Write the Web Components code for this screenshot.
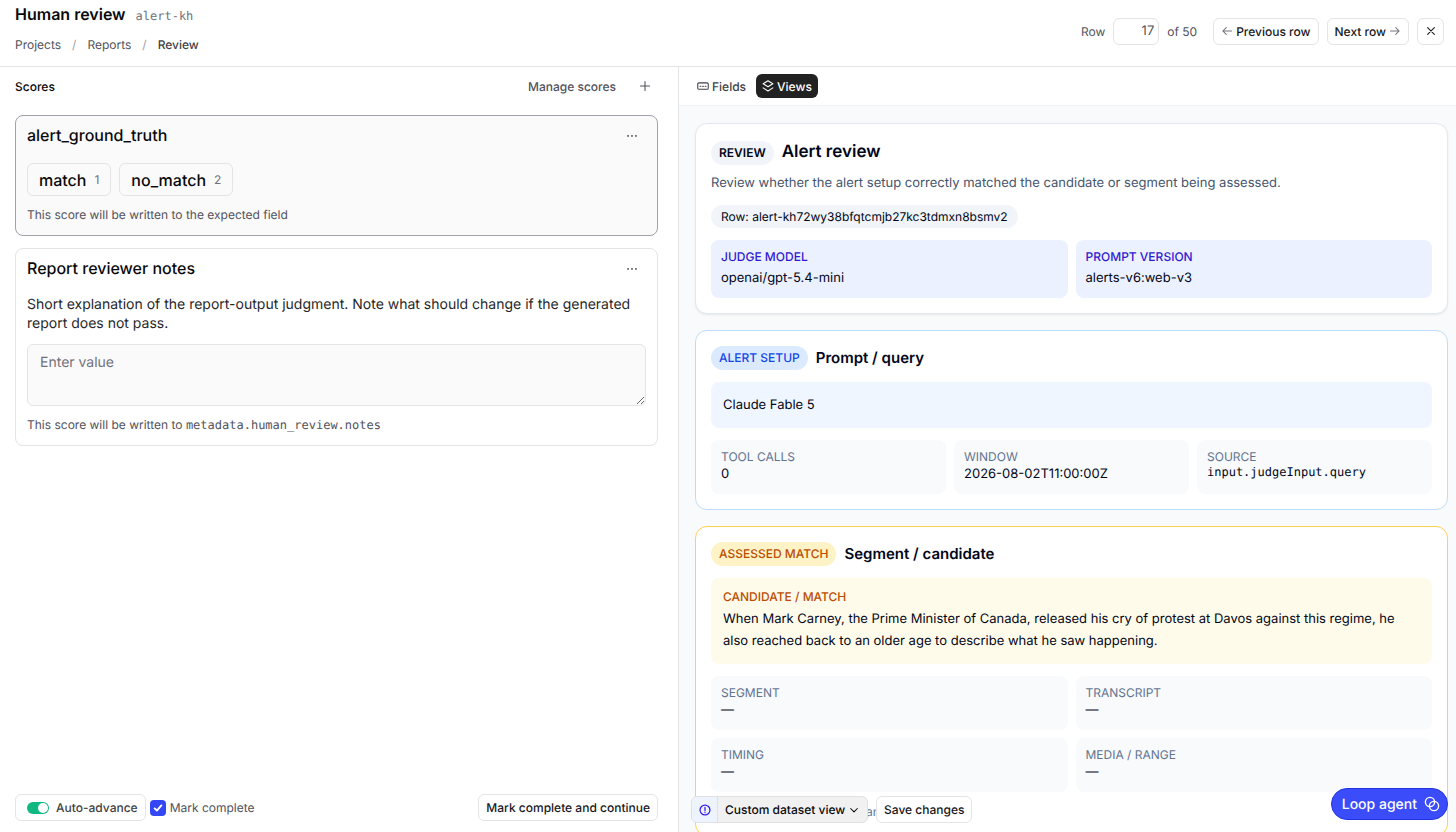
<!DOCTYPE html>
<html lang="en">
<head>
<meta charset="utf-8">
<title>Human review</title>
<style>
    html, body{
        height: 100%;
        margin: 0;
    }
    body{
        font-family: Inter, "Liberation Sans", sans-serif;
        font-size: 12px;
        color: #09090b;
        background: #fff;
        overflow: hidden;
        text-rendering: geometricPrecision;
    }
</style>
</head>
<body>
<review-page></review-page>

<script>
const ICONS = {
    left: '<path d="M14 8H2.500M7 3.500L2.500 8 7 12.500"/>',
    right: '<path d="M2 8h11.500M9 3.500l4.500 4.500L9 12.500"/>',
    close: '<path d="M3.500 3.500l9 9M12.500 3.500l-9 9"/>',
    plus: '<path d="M8 2v12M2 8h12"/>',
    down: '<path d="M3.500 6l4.500 4.500L12.500 6"/>',
    dots: '<g fill="currentColor" stroke="none"><circle cx="3.500" cy="9" r="1.100"/><circle cx="8" cy="9" r="1.100"/><circle cx="12.500" cy="9" r="1.100"/></g>',
    fields: '<rect x="1" y="3.800" width="14" height="8.600" rx="1.500"/><path d="M4 8.200h1.200M7.400 8.200h1.200M10.800 8.200H12"/>',
    layers: '<path d="M8 1L14.500 5 8 9 1.500 5zM1.500 10.500L8 14.700l6.500-4.200"/>',
    alert: '<circle cx="8" cy="8" r="6.600"/><path d="M8 4.600v4M8 10.800v.6"/>',
    check: '<path d="M3.500 8.500l3 3 6-7"/>',
    loop: '<circle cx="6" cy="6" r="4.600"/><circle cx="10" cy="10" r="4.600"/>'
};

class BaseElement extends HTMLElement {
    constructor(){
        super();
        this.attachShadow({mode: "open"});
    }

    getTemplate(){
        const template = document.createElement("template");
        template.innerHTML = `
        <style>
            *{ box-sizing: border-box; }
            h1, h2, h3, p{ margin: 0; }
            button, input, textarea, select{
                font: inherit;
                color: inherit;
                margin: 0;
                text-rendering: inherit;
            }
            ${this.getStyles()}
        </style>
        ${this.getMarkup()}
        `;
        return template;
    }

    connectedCallback(){
        if (this.shadowRoot.childNodes.length) return;
        this.shadowRoot.appendChild(this.getTemplate().content.cloneNode(true));
    }
}

class UiIcon extends BaseElement {
    getStyles(){
        return `
            :host{ display: inline-flex; flex: none; width: 12px; height: 12px; }
            svg{
                width: 100%;
                height: 100%;
                fill: none;
                stroke: currentColor;
                stroke-width: var(--stroke, 1.400);
                stroke-linecap: round;
                stroke-linejoin: round;
            }
        `;
    }
    getMarkup(){
        return `<svg viewBox="0 0 16 16" aria-hidden="true">${ICONS[this.getAttribute("name")]}</svg>`;
    }
}
customElements.define("ui-icon", UiIcon);

class UiButton extends BaseElement {
    getStyles(){
        return `
            :host{ display: inline-flex; flex: none; }
            button{
                display: flex;
                align-items: center;
                justify-content: center;
                gap: 3px;
                height: 27px;
                padding: 0 7px;
                border: 1px solid #e4e4e7;
                border-radius: 6px;
                background: #fff;
                color: #18181b;
                font-weight: 500;
                white-space: nowrap;
            }
            :host([square]) button{ width: 27px; padding: 0; }
            :host([plain]) button{
                height: 24px;
                border: 0;
                background: none;
                color: #52525b;
            }
            :host([tab]) button{
                height: 24px;
                padding: 0 6px;
                border: 0;
                background: none;
                color: #3f3f46;
            }
            :host([tab][active]) button{ background: #222; color: #fff; }
        `;
    }
    getMarkup(){
        const label = this.getAttribute("label");
        return `<button type="button" ${label ? `aria-label="${label}"` : ""}><slot></slot></button>`;
    }
}
customElements.define("ui-button", UiButton);

class PageHeader extends BaseElement {
    getStyles(){
        return `
            :host{
                display: flex;
                justify-content: space-between;
                height: 67px;
                box-sizing: border-box;
                padding: 0 12px 0 15px;
                border-bottom: 1px solid #e4e4e7;
                color: #52525b;
            }
            .title{ display: flex; align-items: baseline; gap: 10px; padding-top: 4px; }
            h1{ font-size: 16px; line-height: 20px; font-weight: 600; color: #09090b; }
            code{ font: 12px/16px "DejaVu Sans Mono", monospace; color: #71717a; }
            nav{ display: flex; gap: 11px; margin-top: 12px; line-height: 18px; }
            a{ color: inherit; text-decoration: none; }
            a[aria-current]{ color: #3f3f46; font-weight: 500; }
            nav span{ color: #a1a1aa; }
            .tools{ display: flex; align-items: center; gap: 8px; height: 62px; }
            input{
                width: 46px;
                height: 27px;
                padding: 0 4px;
                border: 1px solid #e4e4e7;
                border-radius: 6px;
                text-align: right;
                font-size: 13px;
            }
            .total{ margin-right: 8px; }
            ui-icon{ color: #71717a; }
            ui-icon[name=close]{ color: #18181b; }
        `;
    }
    getMarkup(){
        return `
        <div>
            <div class="title"><h1>Human review</h1><code>alert-kh</code></div>
            <nav aria-label="Breadcrumb">
                <a href="#">Projects</a><span>/</span><a href="#">Reports</a><span>/</span><a href="#" aria-current="page">Review</a>
            </nav>
        </div>
        <div class="tools">
            <label for="row">Row</label>
            <input id="row" type="text" inputmode="numeric" value="17">
            <span class="total">of 50</span>
            <ui-button><ui-icon name="left"></ui-icon>Previous row</ui-button>
            <ui-button>Next row<ui-icon name="right"></ui-icon></ui-button>
            <ui-button square label="Close"><ui-icon name="close"></ui-icon></ui-button>
        </div>
        `;
    }
}
customElements.define("page-header", PageHeader);

class ScoreCard extends BaseElement {
    getStyles(){
        return `
            :host{
                display: block;
                padding: 7px 11px 12px;
                border: 1px solid #e4e4e7;
                border-radius: 8px;
                background: #fff;
            }
            :host([selected]){ border-color: #a1a1aa; background: #fafafa; }
            header{ display: flex; align-items: center; justify-content: space-between; }
            h2{ font-size: 16px; line-height: 20px; font-weight: 500; }
            ui-icon{ width: 14px; height: 14px; }
            .note{ color: #52525b; line-height: 16px; }
        `;
    }
    getMarkup(){
        return `
        <header>
            <h2>${this.getAttribute("heading")}</h2>
            <ui-button plain label="More"><ui-icon name="dots"></ui-icon></ui-button>
        </header>
        <slot></slot>
        <p class="note"><slot name="note"></slot></p>
        `;
    }
}
customElements.define("score-card", ScoreCard);

class ScoreOption extends BaseElement {
    getStyles(){
        return `
            :host{ display: inline-flex; }
            button{
                display: flex;
                align-items: center;
                gap: 8px;
                height: 33px;
                padding: 0 11px;
                border: 1px solid #e4e4e7;
                border-radius: 6px;
                background: #fafafa;
                font-size: 16px;
                font-weight: 500;
            }
            span{ font-size: 12px; font-weight: 400; color: #71717a; }
        `;
    }
    getMarkup(){
        return `<button type="button"><slot></slot><span>${this.getAttribute("key")}</span></button>`;
    }
}
customElements.define("score-option", ScoreOption);

class ScoresPanel extends BaseElement {
    getStyles(){
        return `
            :host{
                display: flex;
                flex-direction: column;
                min-width: 0;
                padding: 0 20px 11px 15px;
                border-right: 1px solid #e4e4e7;
                box-sizing: border-box;
            }
            .bar{
                display: flex;
                align-items: center;
                justify-content: space-between;
                height: 38px;
            }
            .bar h2{ font-size: 12px; font-weight: 500; }
            .bar div{ display: flex; gap: 9px; }
            .cards{ display: flex; flex-direction: column; gap: 12px; padding-top: 10px; }
            .options{ display: flex; gap: 8px; margin: 16px 0 11px; }
            .about{ font-size: 14px; line-height: 19px; color: #27272a; margin: 15px 0 11px; }
            textarea{
                display: block;
                width: 100%;
                height: 62px;
                margin-bottom: 11px;
                padding: 9px 12px;
                border: 1px solid #e4e4e7;
                border-radius: 6px;
                background: #fafafa;
                font-size: 14px;
            }
            textarea::placeholder{ color: #71717a; }
            code{ font: 12px/16px "DejaVu Sans Mono", monospace; }
            footer{ display: flex; align-items: center; gap: 4px; margin-top: auto; }
            footer ui-button{ margin-left: auto; }
            .auto{
                display: flex;
                align-items: center;
                gap: 7px;
                height: 27px;
                padding: 0 7px 0 11px;
                border: 1px solid #e4e4e7;
                border-radius: 6px;
                font-weight: 500;
                color: #3f3f46;
            }
            .auto input{
                appearance: none;
                display: flex;
                width: 22px;
                height: 12px;
                padding: 1px;
                border-radius: 6px;
                background: #10b981;
                justify-content: flex-end;
            }
            .auto input::before{ content: ""; width: 10px; height: 10px; border-radius: 50%; background: #fff; }
            .done{ display: flex; align-items: center; gap: 4px; color: #52525b; }
            .box{ display: grid; place-items: center; }
            .box > *{ grid-area: 1 / 1; }
            .box input{ appearance: none; width: 16px; height: 16px; border-radius: 4px; background: #3447f5; }
            .box ui-icon{ color: #fff; pointer-events: none; --stroke: 2.500; }
        `;
    }
    getMarkup(){
        return `
        <div class="bar">
            <h2>Scores</h2>
            <div>
                <ui-button plain>Manage scores</ui-button>
                <ui-button plain label="Add score"><ui-icon name="plus"></ui-icon></ui-button>
            </div>
        </div>
        <div class="cards">
            <score-card selected heading="alert_ground_truth">
                <div class="options">
                    <score-option key="1">match</score-option>
                    <score-option key="2">no_match</score-option>
                </div>
                <span slot="note">This score will be written to the expected field</span>
            </score-card>
            <score-card heading="Report reviewer notes">
                <p class="about" id="about">Short explanation of the report-output judgment. Note what should change if the generated report does not pass.</p>
                <textarea aria-labelledby="about" placeholder="Enter value"></textarea>
                <span slot="note">This score will be written to <code>metadata.human_review.notes</code></span>
            </score-card>
        </div>
        <footer>
            <label class="auto"><input type="checkbox" role="switch" checked>Auto-advance</label>
            <label class="done"><span class="box"><input type="checkbox" checked><ui-icon name="check"></ui-icon></span>Mark complete</label>
            <ui-button>Mark complete and continue</ui-button>
        </footer>
        `;
    }
}
customElements.define("scores-panel", ScoresPanel);

class InfoCard extends BaseElement {
    getStyles(){
        return `
            :host{
                display: flex;
                flex-direction: column;
                gap: 12px;
                padding: 15px;
                border: 1px solid #e2e8f0;
                border-radius: 12px;
                background: #fff;
                --pill: #f1f5f9;
                --pill-ink: #020618;
            }
            :host(:not([tone])){ box-shadow: 0 1px 2px rgba(15, 23, 42, .08); }
            :host([tone=blue]){ border-color: #bedbff; --pill: #dbeafe; --pill-ink: #1447e6; }
            :host([tone=amber]){ border-color: #ffd24d; --pill: #fef3c6; --pill-ink: #bb4d00; }
            header{ display: flex; align-items: center; gap: 8px; }
            .pill{
                padding: 0 8px;
                border-radius: 12px;
                background: var(--pill);
                color: var(--pill-ink);
                line-height: 24px;
                font-weight: 500;
            }
            h2{ font-size: 15px; line-height: 24px; font-weight: 600; color: #020618; }
            :host(:not([tone])) h2{ font-size: 17px; line-height: 27px; }
            :host(:not([tone])) .pill{ font-weight: 600; }
        `;
    }
    getMarkup(){
        return `
        <header>
            <span class="pill">${this.getAttribute("tag")}</span>
            <h2>${this.getAttribute("heading")}</h2>
        </header>
        <slot></slot>
        `;
    }
}
customElements.define("info-card", InfoCard);

class StatTile extends BaseElement {
    getStyles(){
        return `
            :host{
                display: block;
                min-width: 0;
                height: 54px;
                box-sizing: border-box;
                padding: 8px 10px;
                border-radius: 8px;
                background: #f8fafc;
                color: #62748e;
            }
            .name{ line-height: 17px; }
            .value{ font-size: 13px; line-height: 19px; color: #020618; }
            :host([strong]){ height: 58px; background: #ebf1ff; color: #3019d0; }
            :host([strong]) .name{ font-weight: 500; }
            :host([strong]) .value{ margin-top: 4px; }
            :host([mono]) .value{ font: 12px/14px "DejaVu Sans Mono", monospace; }
        `;
    }
    getMarkup(){
        return `
        <div class="name">${this.getAttribute("name")}</div>
        <div class="value"><slot></slot></div>
        `;
    }
}
customElements.define("stat-tile", StatTile);

class ViewsPanel extends BaseElement {
    getStyles(){
        return `
            :host{
                position: relative;
                display: flex;
                flex-direction: column;
                min-width: 0;
                min-height: 0;
                background: #f8fafc;
            }
            .tabs{
                display: flex;
                flex: none;
                align-items: center;
                gap: 4px;
                height: 39px;
                padding: 0 12px;
                border-bottom: 1px solid #f1f1f3;
                background: #fff;
            }
            .scroll{
                display: flex;
                flex-direction: column;
                gap: 16px;
                flex: 1;
                min-height: 0;
                overflow: hidden;
                padding: 17px 8px 0 16px;
            }
            .scroll > *{ flex: none; }
            .lead{ font-size: 13px; line-height: 19px; color: #45556c; margin-top: -4px; }
            .row{
                align-self: flex-start;
                padding: 0 10px;
                border-radius: 12px;
                background: #f1f5f9;
                line-height: 23px;
                color: #020618;
            }
            .grid{ display: grid; grid-template-columns: 1fr 1fr; gap: 8px; }
            .three{ grid-template-columns: 1fr 1fr 1fr; }
            .quote{
                padding: 12px;
                border-radius: 8px;
                background: #eff6ff;
                font-size: 13px;
                line-height: 22px;
                color: #020618;
            }
            .amber{ background: #fffbeb; padding: 10px 16px 12px 12px; }
            .amber h3{ font-size: 12px; line-height: 18px; font-weight: 500; color: #bb4d00; margin-bottom: 2px; }
            .after{ padding-left: 155px; line-height: 16px; color: #62748e; }
            .float{
                position: absolute;
                left: 12px;
                bottom: 9px;
                display: flex;
                gap: 8px;
            }
            .picker{
                display: flex;
                height: 27px;
                border: 1px solid #e0e0e4;
                border-radius: 6px;
                background: #f1f1f1;
                overflow: hidden;
            }
            .picker button{
                display: grid;
                place-items: center;
                width: 26px;
                padding: 0;
                border: 0;
                border-right: 1px solid #d9e2f5;
                background: #eef4ff;
                color: #3a1fe0;
                --stroke: 1.700;
            }
            .select{ display: grid; align-items: center; }
            .select > *{ grid-area: 1 / 1; }
            select{
                appearance: none;
                height: 25px;
                padding: 0 21px 0 7px;
                border: 0;
                background: none;
                font-weight: 500;
            }
            .select ui-icon{ justify-self: end; margin-right: 7px; pointer-events: none; }
            .agent{
                position: absolute;
                right: 8px;
                bottom: 12px;
                display: flex;
                align-items: center;
                gap: 7px;
                height: 32px;
                padding: 0 7px 0 10px;
                border: 1px solid #2334e6;
                border-radius: 16px;
                background: #3b4cfa;
                color: #fff;
                font-size: 14px;
                font-weight: 500;
            }
            .agent ui-icon{ width: 16px; height: 16px; }
        `;
    }
    getMarkup(){
        return `
        <div class="tabs">
            <ui-button tab><ui-icon name="fields"></ui-icon>Fields</ui-button>
            <ui-button tab active><ui-icon name="layers"></ui-icon>Views</ui-button>
        </div>
        <div class="scroll">
            <info-card tag="REVIEW" heading="Alert review">
                <p class="lead">Review whether the alert setup correctly matched the candidate or segment being assessed.</p>
                <span class="row">Row: alert-kh72wy38bfqtcmjb27kc3tdmxn8bsmv2</span>
                <div class="grid">
                    <stat-tile strong name="JUDGE MODEL">openai/gpt-5.4-mini</stat-tile>
                    <stat-tile strong name="PROMPT VERSION">alerts-v6:web-v3</stat-tile>
                </div>
            </info-card>
            <info-card tone="blue" tag="ALERT SETUP" heading="Prompt / query">
                <div class="quote">Claude Fable 5</div>
                <div class="grid three">
                    <stat-tile name="TOOL CALLS">0</stat-tile>
                    <stat-tile name="WINDOW">2026-08-02T11:00:00Z</stat-tile>
                    <stat-tile mono name="SOURCE">input.judgeInput.query</stat-tile>
                </div>
            </info-card>
            <info-card tone="amber" tag="ASSESSED MATCH" heading="Segment / candidate">
                <div class="quote amber">
                    <h3>CANDIDATE / MATCH</h3>
                    <p>When Mark Carney, the Prime Minister of Canada, released his cry of protest at Davos against this regime, he also reached back to an older age to describe what he saw happening.</p>
                </div>
                <div class="grid">
                    <stat-tile name="SEGMENT">—</stat-tile>
                    <stat-tile name="TRANSCRIPT">—</stat-tile>
                    <stat-tile name="TIMING">—</stat-tile>
                    <stat-tile name="MEDIA / RANGE">—</stat-tile>
                </div>
                <p class="after">an</p>
            </info-card>
        </div>
        <div class="float">
            <div class="picker">
                <button type="button" aria-label="View status"><ui-icon name="alert"></ui-icon></button>
                <div class="select">
                    <select aria-label="View"><option>Custom dataset view</option></select>
                    <ui-icon name="down"></ui-icon>
                </div>
            </div>
            <ui-button>Save changes</ui-button>
        </div>
        <button class="agent" type="button">Loop agent<ui-icon name="loop"></ui-icon></button>
        `;
    }
}
customElements.define("views-panel", ViewsPanel);

class ReviewPage extends BaseElement {
    getStyles(){
        return `
            :host{ display: flex; flex-direction: column; height: 100vh; }
            page-header{ flex: none; }
            main{
                flex: 1;
                min-height: 0;
                display: grid;
                grid-template: minmax(0, 1fr) / 679fr 777fr;
            }
        `;
    }
    getMarkup(){
        return `
        <page-header></page-header>
        <main>
            <scores-panel></scores-panel>
            <views-panel></views-panel>
        </main>
        `;
    }
}
customElements.define("review-page", ReviewPage);
</script>
</body>
</html>
